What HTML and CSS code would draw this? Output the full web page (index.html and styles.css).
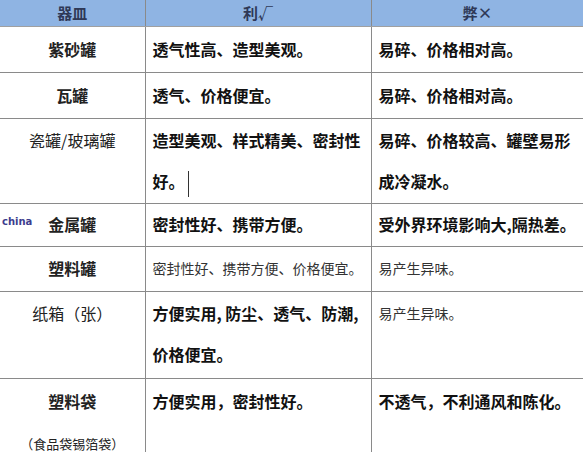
FILE: index.html
```html
<!DOCTYPE html>
<html lang="zh-CN">
<head>
<meta charset="utf-8">
<title>茶叶储存容器</title>
<link rel="stylesheet" href="styles.css">
</head>
<body>
<div class="page">
  <table class="grid">
    <colgroup>
      <col class="c1">
      <col class="c2">
      <col class="c3">
    </colgroup>
    <thead>
      <tr class="head">
        <th>器皿</th>
        <th>利√</th>
        <th>弊×</th>
      </tr>
    </thead>
    <tbody>
      <tr class="r1">
        <td class="name">紫砂罐</td>
        <td>透气性高、造型美观。</td>
        <td>易碎、价格相对高。</td>
      </tr>
      <tr class="r1">
        <td class="name">瓦罐</td>
        <td>透气、价格便宜。</td>
        <td>易碎、价格相对高。</td>
      </tr>
      <tr class="r3">
        <td class="name light">瓷罐/玻璃罐</td>
        <td>造型美观、样式精美、密封性<br>好。<span class="caret"></span></td>
        <td>易碎、价格较高、罐壁易形<br>成冷凝水。</td>
      </tr>
      <tr class="r4">
        <td class="name">金属罐</td>
        <td>密封性好、携带方便。</td>
        <td>受外界环境影响大,隔热差。</td>
      </tr>
      <tr class="r5">
        <td class="name">塑料罐</td>
        <td class="small">密封性好、携带方便、价格便宜。</td>
        <td class="small">易产生异味。</td>
      </tr>
      <tr class="r6">
        <td class="name light">纸箱（张）</td>
        <td>方便实用, 防尘、透气、防潮,<br>价格便宜。</td>
        <td class="small">易产生异味。</td>
      </tr>
      <tr class="r7">
        <td class="name">塑料袋<br><span class="sub">（食品袋锡箔袋）</span></td>
        <td>方便实用，密封性好。</td>
        <td>不透气，不利通风和陈化。</td>
      </tr>
    </tbody>
  </table>
  <span class="mark">china</span>
</div>
</body>
</html>
```

FILE: styles.css
```css
html, body {
  margin: 0;
  padding: 0;
  background: #ffffff;
}

.page {
  position: relative;
  width: 583px;
  height: 452px;
  overflow: hidden;
  font-family: "Noto Sans CJK SC", "Noto Sans", sans-serif;
}

.grid {
  border-collapse: collapse;
  table-layout: fixed;
  width: 584px;
}

.c1 { width: 145px; }
.c2 { width: 226px; }
.c3 { width: 213px; }

.grid th,
.grid td {
  border: 1px solid #8a8a8a;
  padding: 2px 0 2px 7px;
  vertical-align: top;
  text-align: left;
  white-space: nowrap;
  font-size: 16px;
  line-height: 41px;
  font-weight: 700;
  color: #111111;
}

.grid tr:first-child th,
.grid tr:first-child td {
  border-top: none;
}

.grid th:first-child,
.grid td:first-child {
  border-left: none;
}

.head th {
  background: #8fb4e3;
  color: #2e3856;
  text-align: center;
  padding: 2px 0;
  line-height: 22px;
  font-size: 15px;
  border-bottom-color: #a0a0a0;
}

.grid td.name {
  text-align: center;
  padding-left: 0;
  color: #222222;
}

.grid td.light {
  font-weight: 400;
  color: #222222;
}

.grid td.small {
  font-size: 14px;
  font-weight: 400;
  color: #333333;
}

.r3 td { padding-top: 1px; padding-bottom: 1px; }
.r4 td { padding-top: 0; padding-bottom: 1px; }
.r5 td { padding-top: 1px; padding-bottom: 2px; }
.r6 td { padding-top: 1px; padding-bottom: 3px; }
.r7 td { padding-top: 2px; padding-bottom: 2px; }

.sub {
  font-size: 13px;
  font-weight: 400;
  color: #222222;
}

.caret {
  display: inline-block;
  width: 0;
  height: 26px;
  border-left: 1px solid #333333;
  margin-left: 3px;
  vertical-align: middle;
}

.mark {
  position: absolute;
  left: 2px;
  top: 216px;
  font-family: "DejaVu Sans", sans-serif;
  font-weight: 700;
  font-size: 10px;
  color: #3d3d8e;
}
```
